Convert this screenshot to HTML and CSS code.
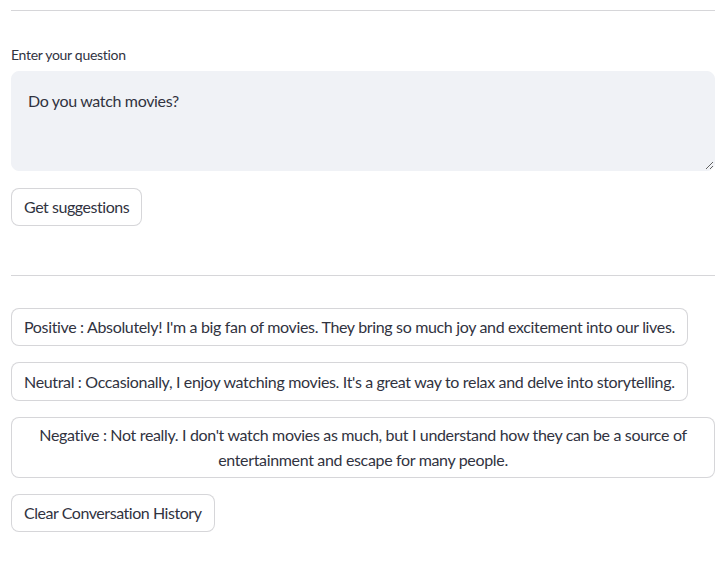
FILE: index.html
```html
<!DOCTYPE html>
<html>
<head>
<meta charset="utf-8">
<link rel="stylesheet" href="styles.css">
</head>
<body>
<main class="main">
  <hr class="divider divider-top">
  <label class="field-label" for="q">Enter your question</label>
  <textarea id="q" class="question">Do you watch movies?</textarea>
  <button class="btn btn-get">Get suggestions</button>
  <hr class="divider divider-mid">
  <div class="answers">
    <button class="btn">Positive : Absolutely! I'm a big fan of movies. They bring so much joy and excitement into our lives.</button>
    <button class="btn">Neutral : Occasionally, I enjoy watching movies. It's a great way to relax and delve into storytelling.</button>
    <button class="btn">Negative : Not really. I don't watch movies as much, but I understand how they can be a source of entertainment and escape for many people.</button>
    <button class="btn btn-short">Clear Conversation History</button>
  </div>
</main>
</body>
</html>
```
FILE: styles.css
```css
html, body {
  margin: 0;
  padding: 0;
  background: #ffffff;
}
body {
  font-family: "Lato", "Noto Sans", sans-serif;
  color: rgb(49, 51, 63);
  font-size: 16px;
  letter-spacing: -0.34px;
}
.main {
  width: 704px;
  padding: 10px 9px 0 11px;
  display: flex;
  flex-direction: column;
  align-items: flex-start;
}
.divider {
  width: 100%;
  height: 0;
  margin: 0;
  border: none;
  border-top: 1px solid rgba(49, 51, 63, 0.2);
}
.field-label {
  margin-top: 33px;
  margin-bottom: 6px;
  font-size: 14px;
  line-height: 21px;
  letter-spacing: -0.3px;
}
.question {
  box-sizing: border-box;
  width: 100%;
  height: 100px;
  margin: 0;
  padding: 16px;
  border: 1px solid #f0f2f6;
  border-radius: 8px;
  background: #f0f2f6;
  color: rgb(49, 51, 63);
  font-family: inherit;
  font-size: 16px;
  letter-spacing: -0.34px;
  line-height: 25.6px;
  resize: vertical;
  outline: none;
}
.btn {
  box-sizing: border-box;
  min-height: 38.4px;
  max-width: 100%;
  margin: 0;
  padding: 4px 12px;
  border: 1px solid rgba(49, 51, 63, 0.2);
  border-radius: 8px;
  background: #ffffff;
  color: rgb(49, 51, 63);
  font-family: inherit;
  font-size: 16px;
  letter-spacing: -0.34px;
  line-height: 25.6px;
  text-align: center;
}
.btn-get,
.btn-short {
  letter-spacing: -0.45px;
}
.btn-get {
  margin-top: 17px;
}
.divider-mid {
  margin-top: 48.5px;
}
.answers {
  margin-top: 32px;
  display: flex;
  flex-direction: column;
  align-items: flex-start;
  gap: 16px;
  width: 100%;
}
```
